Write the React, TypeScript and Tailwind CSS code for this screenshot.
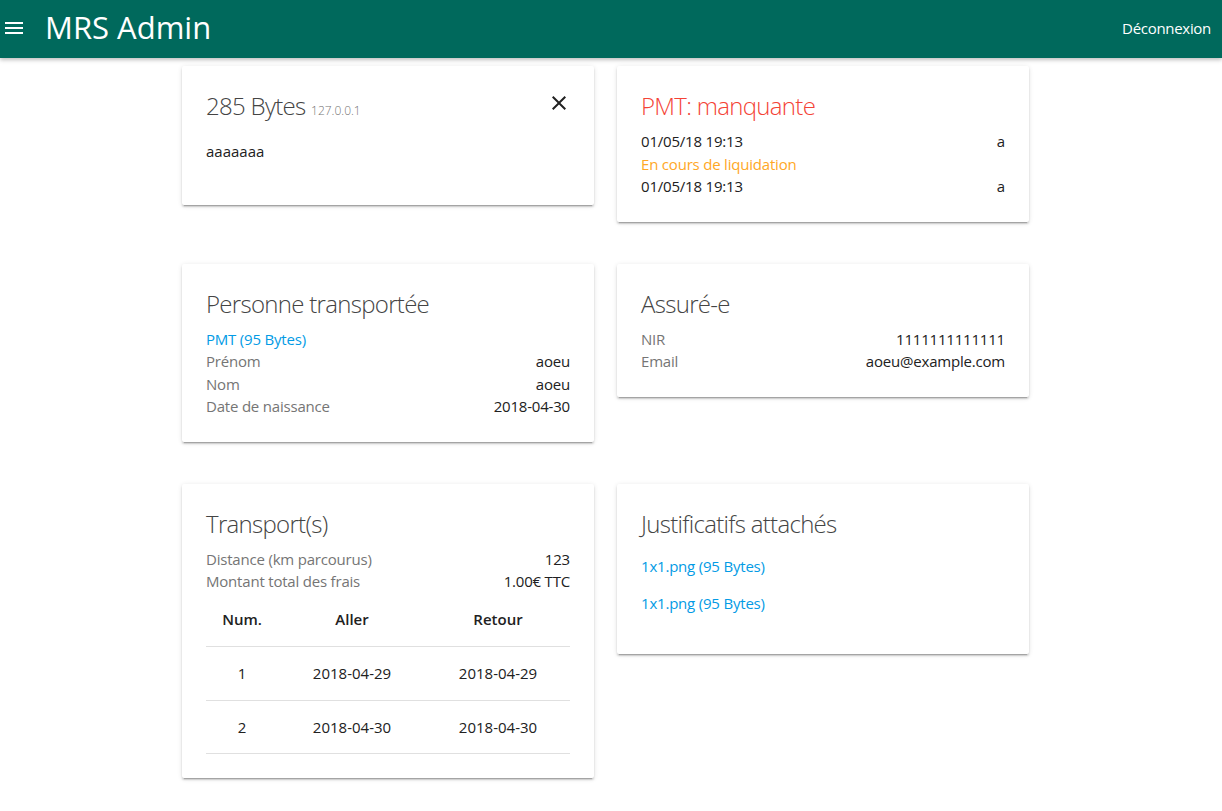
import type { ReactNode } from "react";

const FONT = "font-['Open_Sans','Noto_Sans',sans-serif]";

/** Material-style paper card. */
function Card({ children }: { children: ReactNode }) {
  return (
    <section className="rounded-[2px] bg-white p-6 shadow-[0_2px_2px_0_rgba(0,0,0,0.14),0_3px_1px_-2px_rgba(0,0,0,0.2),0_1px_5px_0_rgba(0,0,0,0.12)]">
      {children}
    </section>
  );
}

function Title({ children, className = "text-[#444]" }: { children: ReactNode; className?: string }) {
  return (
    <h2 className={`text-[24px] font-light leading-8 tracking-[-0.7px] ${className}`}>{children}</h2>
  );
}

function Row({ label, value }: { label: string; value: string }) {
  return (
    <div className="flex items-center justify-between text-[15px] leading-[22.5px] tracking-[-0.2px]">
      <span className="text-[#757575]">{label}</span>
      <span className="text-[#212121]">{value}</span>
    </div>
  );
}

function MenuIcon() {
  return (
    <svg viewBox="0 0 24 24" className="h-6 w-6" fill="currentColor" aria-hidden="true">
      <path d="M3 18h18v-2H3v2zm0-5h18v-2H3v2zm0-7v2h18V6H3z" />
    </svg>
  );
}

function CloseIcon() {
  return (
    <svg viewBox="0 0 24 24" className="h-6 w-6" fill="currentColor" aria-hidden="true">
      <path d="M19 6.41L17.59 5 12 10.59 6.41 5 5 6.41 10.59 12 5 17.59 6.41 19 12 13.41 17.59 19 19 17.59 13.41 12z" />
    </svg>
  );
}

const trips = [
  { num: 1, aller: "2018-04-29", retour: "2018-04-29" },
  { num: 2, aller: "2018-04-30", retour: "2018-04-30" },
];

export default function App() {
  return (
    <div className={`min-h-[811px] bg-white ${FONT}`}>
      {/* Top bar */}
      <header className="relative z-10 flex h-[58px] items-center bg-[#00695c] text-white shadow-[0_2px_4px_rgba(0,0,0,0.25)]">
        <button type="button" className="ml-[2px] mt-[-2px] text-white" aria-label="Menu">
          <MenuIcon />
        </button>
        <h1 className="ml-[19px] mt-[-3px] text-[31px] leading-none">MRS Admin</h1>
        <span className="ml-auto mr-[11px] mt-[-2px] text-[15px] tracking-[-0.3px]">Déconnexion</span>
      </header>

      <main className="ml-[182px] grid w-[847px] grid-cols-[412px_412px] items-start gap-x-[23px] gap-y-[42px] pt-2">
        {/* Upload */}
        <Card>
          <div className="flex items-start justify-between">
            <Title>
              285 Bytes{" "}
              <span className="text-[12px] leading-none font-light tracking-normal text-[#757575]">
                127.0.0.1
              </span>
            </Title>
            <button type="button" className="mr-[-1px] mt-[1px] text-[#212121]" aria-label="Fermer">
              <CloseIcon />
            </button>
          </div>
          <p className="mb-[18px] mt-[18px] text-[15px] leading-[22.5px] text-[#212121]">aaaaaaa</p>
        </Card>

        {/* Status */}
        <Card>
          <Title className="mb-2 text-[#f44336]">PMT: manquante</Title>
          <div className="flex justify-between text-[15px] leading-[22.5px] tracking-[-0.2px] text-[#212121]">
            <span>01/05/18 19:13</span>
            <span>a</span>
          </div>
          <p className="text-[15px] leading-[22.5px] tracking-[-0.2px] text-[#ffa726]">En cours de liquidation</p>
          <div className="flex justify-between text-[15px] leading-[22.5px] tracking-[-0.2px] text-[#212121]">
            <span>01/05/18 19:13</span>
            <span>a</span>
          </div>
        </Card>

        {/* Person */}
        <Card>
          <Title className="mb-2 text-[#444]">Personne transportée</Title>
          <a href="#" className="block text-[15px] leading-[22.5px] tracking-[-0.2px] text-[#039be5]">
            PMT (95 Bytes)
          </a>
          <Row label="Prénom" value="aoeu" />
          <Row label="Nom" value="aoeu" />
          <Row label="Date de naissance" value="2018-04-30" />
        </Card>

        {/* Insured */}
        <Card>
          <Title className="mb-2 text-[#444]">Assuré-e</Title>
          <Row label="NIR" value="1111111111111" />
          <Row label="Email" value="aoeu@example.com" />
        </Card>

        {/* Transports */}
        <Card>
          <Title className="mb-2 text-[#444]">Transport(s)</Title>
          <Row label="Distance (km parcourus)" value="123" />
          <Row label="Montant total des frais" value="1.00€ TTC" />
          <table className="w-full border-collapse text-center text-[15px] text-[#212121]">
            <thead>
              <tr className="h-[54px] border-b border-[#e0e0e0]">
                <th className="w-[72px] font-semibold">Num.</th>
                <th className="w-[148px] font-semibold">Aller</th>
                <th className="font-semibold">Retour</th>
              </tr>
            </thead>
            <tbody>
              {trips.map((t) => (
                <tr key={t.num} className="h-[53.5px] border-b border-[#e0e0e0]">
                  <td>{t.num}</td>
                  <td>{t.aller}</td>
                  <td>{t.retour}</td>
                </tr>
              ))}
            </tbody>
          </table>
        </Card>

        {/* Attachments */}
        <Card>
          <Title className="text-[#444]">Justificatifs attachés</Title>
          {["1x1.png (95 Bytes)", "1x1.png (95 Bytes)"].map((f, i) => (
            <p key={i} className="my-[15px] text-[15px] leading-[22.5px] tracking-[-0.2px]">
              <a href="#" className="text-[#039be5]">
                {f}
              </a>
            </p>
          ))}
        </Card>
      </main>
    </div>
  );
}
